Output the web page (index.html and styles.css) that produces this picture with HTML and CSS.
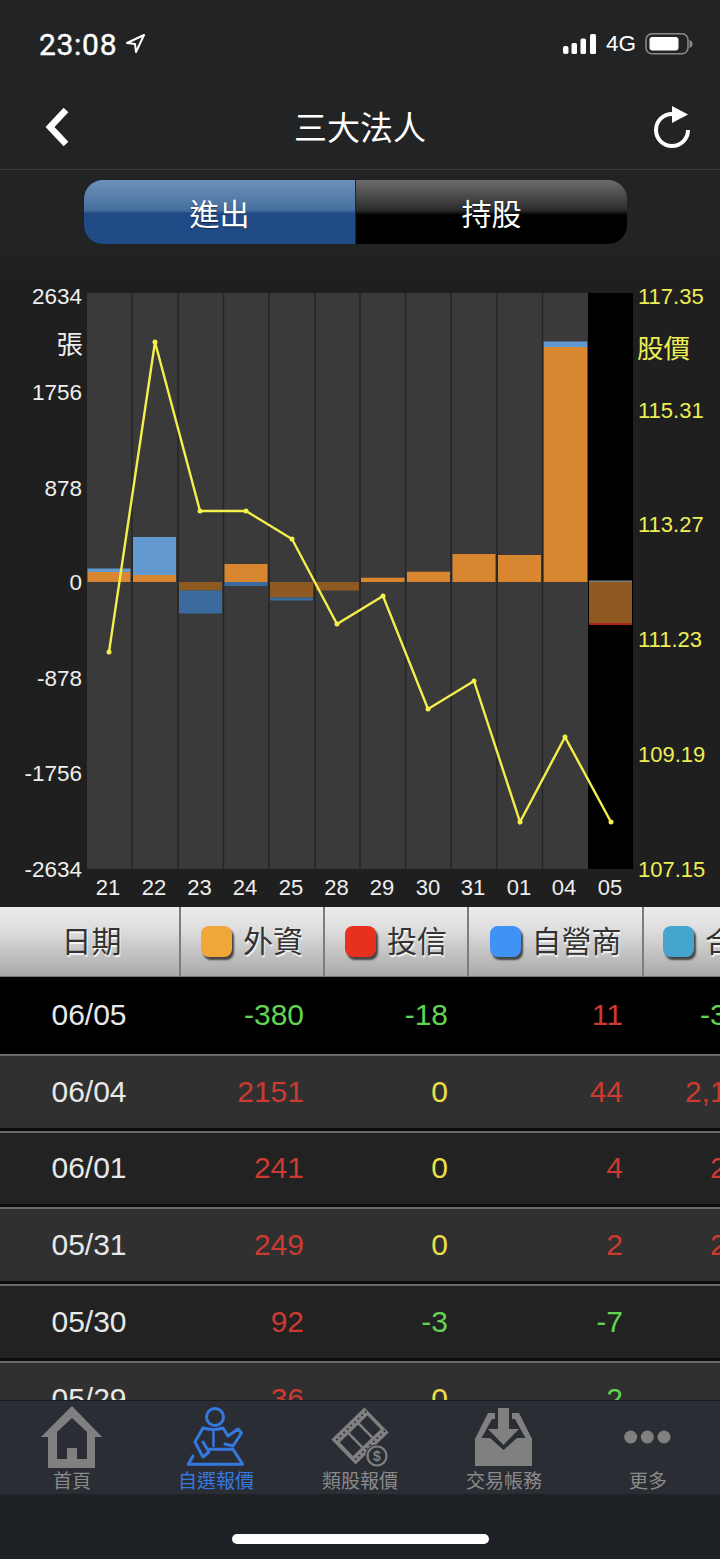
FILE: index.html
```html
<!DOCTYPE html>
<html lang="zh-Hant">

<head>
    <meta charset="UTF-8">
    <meta name="viewport" content="width=device-width, initial-scale=1.0">
    <title>三大法人</title>
    <link rel="stylesheet" href="styles.css">
</head>

<body>
    <div class="status-bar">
        <div class="status-left">
            <span class="clock">23:08</span>
            <svg class="loc-icon" width="22" height="24" viewBox="127 34 22 24">
                <path d="M146 37 L129 45 L137 46 L138 54 Z" fill="none" stroke="#fff" stroke-width="2" stroke-linejoin="round"/>
            </svg>
        </div>
        <div class="status-right">
            <svg width="34" height="20" viewBox="564 35 34 20">
                <rect x="564" y="47" width="5.500" height="8" rx="2" fill="#fff"/>
                <rect x="572.500" y="44" width="5.500" height="11" rx="1.500" fill="#fff"/>
                <rect x="581.500" y="39.500" width="5.500" height="15.500" rx="1.500" fill="#fff"/>
                <rect x="591" y="35" width="6" height="20" rx="1.500" fill="#fff"/>
            </svg>
            <span class="net">4G</span>
            <svg width="48" height="22" viewBox="645 33 48 22">
                <rect x="646" y="33.800" width="42" height="20" rx="6" fill="none" stroke="#8a8a8a" stroke-width="1.600"/>
                <rect x="649.500" y="37" width="29" height="13.500" rx="3" fill="#fff"/>
                <path d="M689.500 40 Q692.500 41 692.500 44 Q692.500 47 689.500 48 Z" fill="#8a8a8a"/>
            </svg>
        </div>
    </div>

    <div class="nav">
        <svg class="nav-back" width="30" height="44" viewBox="42 105 30 44">
            <path d="M66 110 L50 127 L66 144" fill="none" stroke="#fff" stroke-width="6.500"/>
        </svg>
        <div class="nav-title">三大法人</div>
        <svg class="nav-reload" width="44" height="48" viewBox="650 104 44 48">
            <path d="M672 114 A16 16 0 1 0 688 130" fill="none" stroke="#fff" stroke-width="4"/>
            <path d="M672 106 L688 114.500 L672 123 Z" fill="#fff"/>
        </svg>
    </div>

    <div class="segment">
        <div class="seg-btn seg-on">進出</div>
        <div class="seg-btn seg-off">持股</div>
    </div>

    <svg class="chart" width="720" height="663" viewBox="0 244 720 663">
        <rect x="87" y="293" width="501" height="576" fill="#3a3a3a"/>
        <rect x="588" y="293" width="45" height="576" fill="#000"/>
        <g stroke="#262626" stroke-width="1.500">
            <line x1="132" y1="293" x2="132" y2="869"/>
            <line x1="178" y1="293" x2="178" y2="869"/>
            <line x1="223.500" y1="293" x2="223.500" y2="869"/>
            <line x1="269" y1="293" x2="269" y2="869"/>
            <line x1="315" y1="293" x2="315" y2="869"/>
            <line x1="360" y1="293" x2="360" y2="869"/>
            <line x1="405.500" y1="293" x2="405.500" y2="869"/>
            <line x1="451" y1="293" x2="451" y2="869"/>
            <line x1="497" y1="293" x2="497" y2="869"/>
            <line x1="542.500" y1="293" x2="542.500" y2="869"/>
        </g>

        <!-- bars -->
        <rect class="b-blue" x="87.500" y="568.500" width="43" height="4"/>
        <rect class="b-org" x="87.500" y="572" width="43" height="10"/>
        <rect class="b-blue" x="133" y="537" width="43" height="38"/>
        <rect class="b-org" x="133" y="575" width="43" height="7"/>
        <rect class="b-org-d" x="179" y="582" width="43" height="8.500"/>
        <rect class="b-blue-d" x="179" y="590.500" width="43" height="23"/>
        <rect class="b-org" x="224.500" y="564" width="43" height="18"/>
        <rect class="b-blue-d" x="224.500" y="582" width="43" height="4"/>
        <rect class="b-org-d" x="270" y="582" width="43" height="15.500"/>
        <rect class="b-blue-d" x="270" y="597.500" width="43" height="3"/>
        <rect class="b-org-d" x="316" y="582" width="43" height="8.500"/>
        <rect class="b-org" x="361" y="577.700" width="43.500" height="4.300"/>
        <rect class="b-org" x="407" y="571.700" width="43" height="10.300"/>
        <rect class="b-org" x="452.500" y="554" width="43" height="28"/>
        <rect class="b-org" x="498" y="555" width="43" height="27"/>
        <rect class="b-blue" x="543.700" y="341.500" width="43.500" height="5.500"/>
        <rect class="b-org" x="543.700" y="347" width="43.500" height="235"/>
        <rect x="589" y="580.500" width="43" height="1.500" fill="#77808a"/>
        <rect class="b-org-d" x="589" y="582" width="43" height="41"/>
        <rect x="589" y="623" width="43" height="2" fill="#a8261c"/>

        <!-- price line -->
        <polyline points="109,652 155,342 200,511 246,511 292,539 337,624 383,596 428,709 474,681 520,822 565,737 611,822" fill="none" stroke="#f4ef4c" stroke-width="2.400"/>
        <g fill="#f4ef4c">
            <circle cx="109" cy="652" r="2.500"/>
            <circle cx="155" cy="342" r="2.500"/>
            <circle cx="200" cy="511" r="2.500"/>
            <circle cx="246" cy="511" r="2.500"/>
            <circle cx="292" cy="539" r="2.500"/>
            <circle cx="337" cy="624" r="2.500"/>
            <circle cx="383" cy="596" r="2.500"/>
            <circle cx="428" cy="709" r="2.500"/>
            <circle cx="474" cy="681" r="2.500"/>
            <circle cx="520" cy="822" r="2.500"/>
            <circle cx="565" cy="737" r="2.500"/>
            <circle cx="611" cy="822" r="2.500"/>
        </g>

        <!-- left axis -->
        <g class="axis-left">
            <text x="82" y="304">2634</text>
            <text class="axis-cjk" x="83" y="354">張</text>
            <text x="82" y="400">1756</text>
            <text x="82" y="496">878</text>
            <text x="82" y="590">0</text>
            <text x="82" y="686">-878</text>
            <text x="82" y="781">-1756</text>
            <text x="82" y="877">-2634</text>
        </g>

        <!-- right axis -->
        <g class="axis-right">
            <text x="638" y="304">117.35</text>
            <text class="axis-cjk" x="637" y="358">股價</text>
            <text x="638" y="418">115.31</text>
            <text x="638" y="532">113.27</text>
            <text x="638" y="647">111.23</text>
            <text x="638" y="762">109.19</text>
            <text x="638" y="877">107.15</text>
        </g>

        <!-- dates -->
        <g class="axis-date">
            <text x="108" y="895">21</text>
            <text x="154" y="895">22</text>
            <text x="199.500" y="895">23</text>
            <text x="245" y="895">24</text>
            <text x="291" y="895">25</text>
            <text x="336.500" y="895">28</text>
            <text x="382" y="895">29</text>
            <text x="428" y="895">30</text>
            <text x="473" y="895">31</text>
            <text x="519" y="895">01</text>
            <text x="564" y="895">04</text>
            <text x="610" y="895">05</text>
        </g>
    </svg>

    <div class="table-head cols">
        <div class="th th-date">日期</div>
        <div class="th"><span class="swatch sw-orange"></span>外資</div>
        <div class="th"><span class="swatch sw-red"></span>投信</div>
        <div class="th"><span class="swatch sw-blue"></span>自營商</div>
        <div class="th"><span class="swatch sw-teal"></span>合計</div>
    </div>

    <div class="table-body">
        <div class="row row-now cols">
            <div class="date">06/05</div>
            <div class="num down">-380</div>
            <div class="num down">-18</div>
            <div class="num up">11</div>
            <div class="num down">-387</div>
        </div>
        <div class="row row-odd cols">
            <div class="date">06/04</div>
            <div class="num up">2151</div>
            <div class="num flat">0</div>
            <div class="num up">44</div>
            <div class="num up">2,195</div>
        </div>
        <div class="row cols">
            <div class="date">06/01</div>
            <div class="num up">241</div>
            <div class="num flat">0</div>
            <div class="num up">4</div>
            <div class="num up">245</div>
        </div>
        <div class="row row-odd cols">
            <div class="date">05/31</div>
            <div class="num up">249</div>
            <div class="num flat">0</div>
            <div class="num up">2</div>
            <div class="num up">251</div>
        </div>
        <div class="row cols">
            <div class="date">05/30</div>
            <div class="num up">92</div>
            <div class="num down">-3</div>
            <div class="num down">-7</div>
            <div class="num up">82</div>
        </div>
        <div class="row row-odd cols">
            <div class="date">05/29</div>
            <div class="num up">36</div>
            <div class="num flat">0</div>
            <div class="num down">2</div>
            <div class="num up">38</div>
        </div>
    </div>

    <div class="tabbar">
        <div class="tab">
            <svg width="144" height="68" viewBox="0 1400 144 68">
                <path fill-rule="evenodd" fill="#808080" d="M72 1405 L102 1436 L95 1436 L95 1467 L48 1467 L48 1436 L41 1436 Z M72 1417 L57 1431 L57 1458 L67 1458 L67 1447 L77 1447 L77 1458 L87 1458 L87 1431 Z"/>
            </svg>
            <span>首頁</span>
        </div>
        <div class="tab tab-on">
            <svg width="144" height="68" viewBox="144 1400 144 68">
                <g fill="none" stroke="#3579e0" stroke-width="3" stroke-linejoin="round" stroke-linecap="round">
                    <circle cx="215" cy="1416" r="8.500"/>
                    <path d="M203 1427 L195 1441 L203 1456 L209 1451 L203 1441"/>
                    <path d="M203 1427 Q214 1430 223 1427 L228 1435 L238 1428 L241.500 1432 L233 1445 L225 1443"/>
                    <path d="M213.500 1430 L213.500 1445" stroke-width="2.500"/>
                    <path d="M193 1455 L188.300 1463.300 L242.600 1463.300 L233 1448.300 L208 1448.300"/>
                </g>
            </svg>
            <span>自選報價</span>
        </div>
        <div class="tab">
            <svg width="144" height="68" viewBox="288 1400 144 68">
                <g transform="rotate(-44 360 1435)">
                    <rect x="337" y="1417.500" width="46" height="35" fill="#808080"/>
                    <g fill="#2a2d33">
                        <rect x="341" y="1425.500" width="11.500" height="19"/>
                        <rect x="355" y="1425.500" width="11.500" height="19"/>
                        <rect x="369" y="1425.500" width="10.500" height="19"/>
                        <circle cx="341" cy="1421.500" r="1"/>
                        <circle cx="346" cy="1421.500" r="1"/>
                        <circle cx="351" cy="1421.500" r="1"/>
                        <circle cx="356" cy="1421.500" r="1"/>
                        <circle cx="361" cy="1421.500" r="1"/>
                        <circle cx="366" cy="1421.500" r="1"/>
                        <circle cx="371" cy="1421.500" r="1"/>
                        <circle cx="376" cy="1421.500" r="1"/>
                        <circle cx="381" cy="1421.500" r="1"/>
                        <circle cx="341" cy="1448.500" r="1"/>
                        <circle cx="346" cy="1448.500" r="1"/>
                        <circle cx="351" cy="1448.500" r="1"/>
                        <circle cx="356" cy="1448.500" r="1"/>
                        <circle cx="361" cy="1448.500" r="1"/>
                        <circle cx="366" cy="1448.500" r="1"/>
                        <circle cx="371" cy="1448.500" r="1"/>
                        <circle cx="376" cy="1448.500" r="1"/>
                        <circle cx="381" cy="1448.500" r="1"/>
                    </g>
                </g>
                <circle cx="377" cy="1455" r="11.500" fill="#2a2d33"/>
                <circle cx="377" cy="1455" r="9.500" fill="none" stroke="#808080" stroke-width="2.200"/>
                <text class="coin" x="377" y="1460">$</text>
            </svg>
            <span>類股報價</span>
        </div>
        <div class="tab">
            <svg width="144" height="68" viewBox="432 1400 144 68">
                <g fill="#808080">
                    <path d="M498 1407 L509 1407 L509 1428 L519 1428 L503.500 1444 L488 1428 L498 1428 Z"/>
                    <path d="M475 1437 L490 1437 L503.500 1449 L517 1437 L532 1437 L532 1465 L475 1465 Z"/>
                    <path d="M488 1412 L495 1412 L495 1418 L492 1418 L481 1438 L475 1438 Z"/>
                    <path d="M512 1412 L519 1412 L532 1438 L526 1438 L515 1418 L512 1418 Z"/>
                </g>
            </svg>
            <span>交易帳務</span>
        </div>
        <div class="tab">
            <svg width="144" height="68" viewBox="576 1400 144 68">
                <g fill="#808080">
                    <circle cx="630.700" cy="1436" r="6.500"/>
                    <circle cx="647.300" cy="1436" r="6.500"/>
                    <circle cx="664" cy="1436" r="6.500"/>
                </g>
            </svg>
            <span>更多</span>
        </div>
    </div>

    <div class="home-area">
        <div class="home-bar"></div>
    </div>
</body>

</html>
```

FILE: styles.css
```css
html, body {
    margin: 0;
    padding: 0;
}

body {
    width: 720px;
    height: 1559px;
    overflow: hidden;
    display: flex;
    flex-direction: column;
    background-color: #222325;
    color: #fff;
    font-family: "Liberation Sans", "Noto Sans CJK TC", sans-serif;
}

svg {
    display: block;
    flex-shrink: 0;
}

/* status bar */
.status-bar {
    height: 84px;
    flex-shrink: 0;
    display: flex;
    justify-content: space-between;
    align-items: flex-start;
    padding: 27px 27px 0 39px;
    box-sizing: border-box;
}

.status-left {
    display: flex;
    align-items: center;
    gap: 8px;
    height: 34px;
}

.clock {
    font-family: Roboto, sans-serif;
    font-size: 30px;
    letter-spacing: 0.7px;
    -webkit-text-stroke: 0.4px #fff;
}

.status-right {
    display: flex;
    align-items: center;
    height: 34px;
}

.net {
    font-size: 22.5px;
    margin: 0 9px 0 9px;
}

/* nav */
.nav {
    height: 85px;
    flex-shrink: 0;
    display: flex;
    align-items: center;
    justify-content: space-between;
    padding: 0 26px 0 42px;
    border-bottom: 1px solid #3a3b3c;
}

.nav-title {
    font-family: "Noto Sans CJK TC", sans-serif;
    font-size: 33px;
    margin-left: -2px;
    margin-top: -2px;
}

.nav-back {
    margin-top: 1px;
}

.nav-reload {
    margin-top: 2px;
}

/* segment */
.segment {
    display: flex;
    width: 543px;
    height: 64px;
    flex-shrink: 0;
    margin: 10px 0 0 84px;
    border-radius: 19px;
    overflow: hidden;
}

.seg-btn {
    display: flex;
    align-items: center;
    justify-content: center;
    font-family: "Noto Sans CJK TC", sans-serif;
    font-size: 30px;
    box-sizing: border-box;
    text-shadow: 0 1px 1px rgba(0, 0, 0, 0.5);
}

.seg-on {
    width: 271px;
    background: linear-gradient(#6f92bb, #466f9f 47%, #214b87 52%, #214b87);
    margin-right: 1px;
}

.seg-off {
    width: 271px;
    background: linear-gradient(#6c6c6c, #2c2c2c 47%, #000 55%, #000);
}

/* chart */
.chart {
    background: linear-gradient(#222325, #1f1f1f 6%);
}

.b-org { fill: #d8862f; }
.b-org-d { fill: #8f5a22; }
.b-blue { fill: #6299d0; }
.b-blue-d { fill: #3a6a9e; }

.axis-left text,
.axis-right text,
.axis-date text {
    font-family: "Liberation Sans", "Noto Sans CJK TC", sans-serif;
}

.axis-left text {
    fill: #eeeeee;
    font-size: 22.5px;
    text-anchor: end;
}

.axis-right text {
    fill: #eeee55;
    font-size: 22px;
}

.axis-date text {
    fill: #eeeeee;
    font-size: 22px;
    text-anchor: middle;
}

.axis-left .axis-cjk,
.axis-right .axis-cjk {
    font-family: "Noto Sans CJK TC", sans-serif;
    font-size: 26.5px;
}

/* table */
.cols {
    display: grid;
    grid-template-columns: 181px 144px 144px 175px 142px;
    width: 786px;
}

.table-head {
    height: 70px;
    flex-shrink: 0;
}

.th {
    display: flex;
    align-items: center;
    justify-content: center;
    gap: 11px;
    box-sizing: border-box;
    border-right: 2px solid #7c7c7c;
    border-bottom: 1px solid #777;
    padding-bottom: 5px;
    background: linear-gradient(#ededed, #dcdcdc 35%, #a9a9a9);
    color: #333;
    font-family: "Noto Sans CJK TC", sans-serif;
    font-size: 30px;
    text-shadow: 1px 2px 1px rgba(255, 255, 255, 0.85);
}

.th-date {
    padding-left: 4px;
}

.swatch {
    width: 31px;
    height: 31px;
    margin-top: 5px;
    border-radius: 8px;
    box-shadow: 2px 3px 2px #444;
}

.sw-orange { background-color: #f0a73a; }
.sw-red { background-color: #e8301f; }
.sw-blue { background-color: #4093f5; }
.sw-teal { background-color: #45a5cf; }

.table-body {
    height: 423px;
    flex-shrink: 0;
    overflow: hidden;
}

.row {
    height: 76.75px;
    box-sizing: border-box;
    border-top: 2px solid #6a6a6a;
    border-bottom: 3px solid #0c0c0c;
    background-color: #222222;
    font-size: 30px;
    align-items: center;
}

.row-odd {
    background-color: #303030;
}

.row-now {
    background-color: #000;
    border-top-color: #000;
    border-bottom-color: #000;
}

.date {
    color: #e8e8e8;
    text-align: center;
    padding-right: 3px;
}

.num {
    text-align: right;
    padding-right: 21px;
}

.num:last-child {
    padding-right: 26px;
}

.up { color: #cc3a30; }
.down { color: #62d452; }
.flat { color: #ecdf4a; }

/* tab bar */
.tabbar {
    height: 94px;
    flex-shrink: 0;
    display: grid;
    grid-template-columns: repeat(5, 144px);
    background-color: #2a2d33;
    box-sizing: border-box;
    border-top: 1px solid #1a1a1a;
}

.tab {
    display: flex;
    flex-direction: column;
    align-items: center;
    font-family: "Noto Sans CJK TC", sans-serif;
    font-size: 19px;
    line-height: 22px;
    color: #8a8a8a;
}

.tab-on {
    color: #3579e0;
}

.coin {
    fill: #808080;
    font-family: "Liberation Sans", sans-serif;
    font-size: 14px;
    font-weight: bold;
    text-anchor: middle;
}

/* home indicator */
.home-area {
    flex: 1;
    background-color: #1e2126;
    padding-top: 40px;
}

.home-bar {
    width: 257px;
    height: 10px;
    margin: 0 auto;
    border-radius: 5px;
    background-color: #fff;
}
```
